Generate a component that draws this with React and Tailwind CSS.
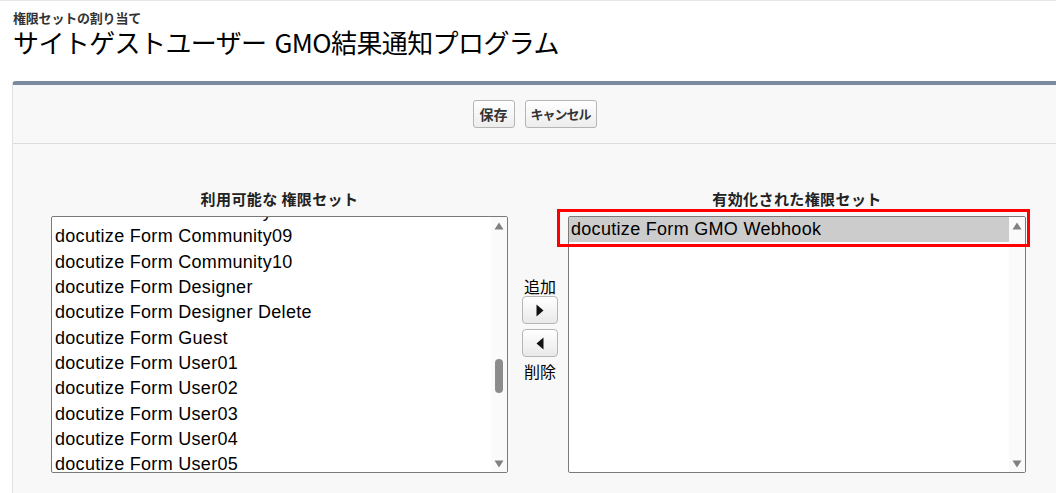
import React from "react";

const jp = { fontFamily: '"Noto Sans CJK JP", "Noto Sans", sans-serif' };
const latin = { fontFamily: '"Liberation Sans", Arial, "Noto Sans CJK JP", sans-serif' };

const available = [
  "docutize Form Community08",
  "docutize Form Community09",
  "docutize Form Community10",
  "docutize Form Designer",
  "docutize Form Designer Delete",
  "docutize Form Guest",
  "docutize Form User01",
  "docutize Form User02",
  "docutize Form User03",
  "docutize Form User04",
  "docutize Form User05",
  "docutize Form User06",
];

function ArrowUp() {
  return (
    <svg width="10" height="8" viewBox="0 0 10 8">
      <path d="M5 0.5 L9.5 7.5 L0.5 7.5 Z" fill="#808080" />
    </svg>
  );
}

function ArrowDown() {
  return (
    <svg width="10" height="8" viewBox="0 0 10 8">
      <path d="M0.5 0.5 L9.5 0.5 L5 7.5 Z" fill="#808080" />
    </svg>
  );
}

function ScrollTrack({ thumb }) {
  return (
    <div className="relative w-[16px] h-full bg-[#fafafa] flex flex-col items-center justify-between pt-[5px] pb-[4px]">
      <ArrowUp />
      {thumb && (
        <div className="absolute left-[4px] top-[142px] w-[8px] h-[34px] rounded-full bg-[#8c8c8c]" />
      )}
      <ArrowDown />
    </div>
  );
}

function Btn({ children, className = "" }) {
  return (
    <button
      className={
        "h-[28px] rounded-[3px] border border-[#b5b5b5] bg-gradient-to-b from-white to-[#ededed] text-[#333] font-bold flex items-center justify-center " +
        className
      }
      style={jp}
    >
      {children}
    </button>
  );
}

function MoveBtn({ dir }) {
  return (
    <button className="w-[36px] h-[28px] rounded-[4px] border border-[#b5b5b5] bg-gradient-to-b from-white to-[#e9e9e9] flex items-center justify-center">
      <svg width="8" height="13" viewBox="0 0 8 13">
        {dir === "right" ? (
          <path d="M0.5 0.5 L7.5 6.5 L0.5 12.5 Z" fill="#111" />
        ) : (
          <path d="M7.5 0.5 L0.5 6.5 L7.5 12.5 Z" fill="#111" />
        )}
      </svg>
    </button>
  );
}

export default function App() {
  return (
    <div className="w-[1056px] h-[493px] bg-white overflow-hidden border-t border-[#e6e6e6]" style={jp}>
      {/* page header */}
      <div className="pl-[13px] pt-[10px]">
        <div className="text-[13px] leading-[14px] font-bold text-[#333] tracking-[-0.2px]">権限セットの割り当て</div>
        <h1 className="mt-[3px] text-[26px] leading-[27px] text-black tracking-[-0.6px]">
          サイトゲストユーザー<span className="ml-[8px]">GMO</span>結果通知プログラム
        </h1>
      </div>

      {/* edit panel */}
      <div className="ml-[12px] mt-[26px] h-[420px] bg-[#f8f8f8] border-t-4 border-t-[#7b8aa1] border-l border-l-[#e0e0e0] rounded-tl-[4px]">
        <div className="flex justify-center gap-[10px] py-[15px] border-b border-[#dcdcdc]">
          <Btn className="w-[42px] text-[14px]">保存</Btn>
          <Btn className="w-[72px] text-[13px] tracking-[-1px]">キャンセル</Btn>
        </div>

        <div className="pt-[45px] pl-[38px]">
          {/* column titles */}
          <div className="flex font-bold text-[15px] leading-[20px] text-[#222] tracking-[0.4px]">
            <div className="w-[457px] text-center">利用可能な 権限セット</div>
            <div className="w-[60px]" />
            <div className="w-[458px] text-center">有効化された権限セット</div>
          </div>

          <div className="flex mt-[7px]">
            {/* available list */}
            <div className="w-[457px] h-[257px] bg-white border border-[#7a7a7a] rounded-[2px] flex overflow-hidden">
              <div className="flex-1 overflow-hidden">
                <div className="-mt-[18px]" style={latin}>
                  {available.map((name) => (
                    <div
                      key={name}
                      className="h-[25.33px] leading-[25.33px] pl-[3px] text-[18px] text-black tracking-[0.3px] whitespace-nowrap"
                    >
                      {name}
                    </div>
                  ))}
                </div>
              </div>
              <ScrollTrack thumb />
            </div>

            {/* move buttons */}
            <div className="w-[60px] pl-[4px] flex flex-col items-center">
              <div className="mt-[62px] text-[16px] leading-[16px] text-black">追加</div>
              <div className="mt-[2px]">
                <MoveBtn dir="right" />
              </div>
              <div className="mt-[5px]">
                <MoveBtn dir="left" />
              </div>
              <div className="mt-[6px] text-[16px] leading-[16px] text-black">削除</div>
            </div>

            {/* enabled list */}
            <div className="relative">
              <div className="w-[458px] h-[257px] bg-white border border-[#7a7a7a] rounded-[2px] flex overflow-hidden">
                <div className="flex-1" style={latin}>
                  <div className="h-[25px] leading-[24px] pl-[2px] text-[18px] text-black tracking-[0.3px] bg-[#cccccc] whitespace-nowrap">
                    docutize Form GMO Webhook
                  </div>
                </div>
                <ScrollTrack />
              </div>
              <div className="absolute -left-[11px] -top-[7px] w-[473px] h-[38px] border-[3px] border-[#ff0000]" />
            </div>
          </div>
        </div>
      </div>
    </div>
  );
}
